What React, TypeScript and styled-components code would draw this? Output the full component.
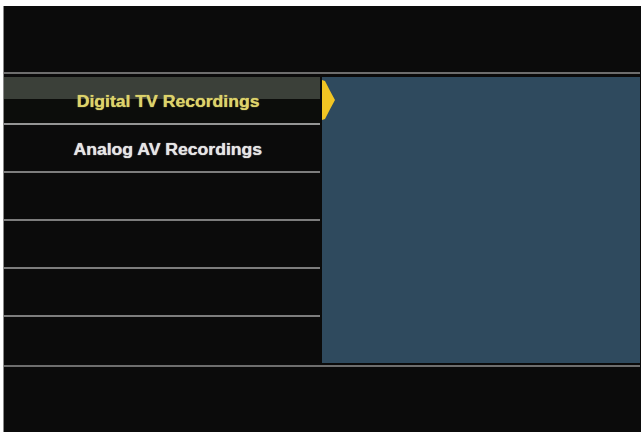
import styled, { createGlobalStyle } from "styled-components";

const GlobalStyle = createGlobalStyle`
  html, body {
    margin: 0;
    padding: 0;
    background: #ffffff;
  }
  body {
    font-family: "Liberation Sans", Arial, sans-serif;
  }
`;

const items = [
  "Digital TV Recordings",
  "Analog AV Recordings",
  "",
  "",
  "",
  "",
];

const App = () => {
  const selected = 0;
  return (
    <>
      <GlobalStyle />
      <Screen>
        <Header />
        <Rule />
        <Main>
          <List>
            {items.map((label, i) => (
              <Row key={i} $active={i === selected}>
                <RowLabel $active={i === selected}>{label}</RowLabel>
                {i === selected && (
                  <Pointer width="14" height="42" viewBox="0 0 14 42">
                    <path d="M0 1 L3 2 Q8 12 13 21 Q8 30 3 40 L0 41 Z" fill="#f2c523" />
                  </Pointer>
                )}
              </Row>
            ))}
          </List>
          <Preview />
        </Main>
        <Rule />
        <Footer />
      </Screen>
    </>
  );
};

const Screen = styled.div`
  margin: 6px 2px 0 3px;
  height: 426px;
  background: #0b0b0b;
  border-left: 1px solid #8a8a8a;
  display: flex;
  flex-direction: column;
`;

const Header = styled.div`
  height: 66px;
`;

const Rule = styled.div`
  height: 2px;
  background: #6e6e6e;
  margin-right: 1px;
`;

const Main = styled.div`
  display: flex;
  gap: 2px;
  padding: 3px 1px 1px 0;
  height: 287px;
`;

const List = styled.div`
  width: 316px;
  display: flex;
  flex-direction: column;
`;

const Row = styled.div<{ $active: boolean }>`
  position: relative;
  box-sizing: border-box;
  height: 48px;
  padding: 4px 0 0 12px;
  border-bottom: 2px solid ${(p) => (p.$active ? "#959595" : "#7d7d7d")};
  display: flex;
  align-items: center;
  justify-content: center;
  background: ${(p) =>
    p.$active
      ? "linear-gradient(#3b4039 0, #3b4039 48%, #0c0d0b 48%, #0c0d0b 100%)"
      : "transparent"};

  &:last-child {
    height: 47px;
    border-bottom: none;
  }
`;

const RowLabel = styled.span<{ $active: boolean }>`
  display: inline-block;
  font-size: 16px;
  font-weight: bold;
  transform: scaleX(1.1);
  color: ${(p) => (p.$active ? "#ddd36a" : "#e6e6e6")};
  text-shadow: 0 0 1px ${(p) => (p.$active ? "#ddd36a" : "#e6e6e6")};
  white-space: nowrap;
`;

const Pointer = styled.svg`
  position: absolute;
  right: -16px;
  top: 2px;
`;

const Preview = styled.div`
  flex: 1;
  background: #2f4a5e;
  margin-bottom: 1px;
`;

const Footer = styled.div`
  flex: 1;
`;

export default App;
